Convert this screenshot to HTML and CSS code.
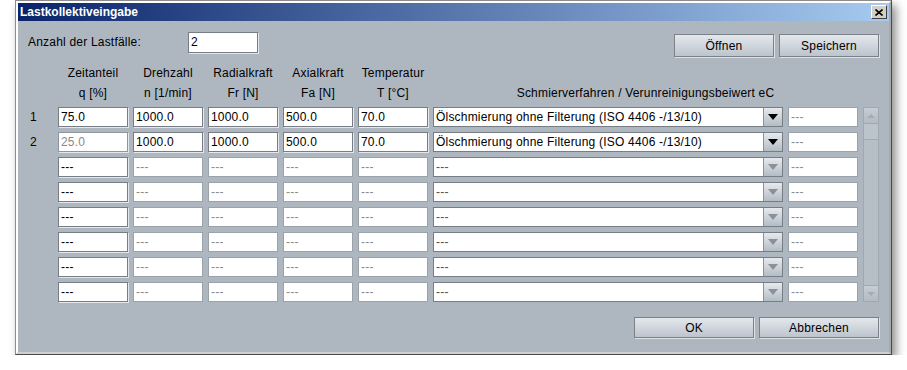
FILE: index.html
```html
<!DOCTYPE html>
<html lang="de">
<head>
  <meta charset="UTF-8" />
  <title>Lastkollektiveingabe</title>
  <link rel="stylesheet" href="styles.css">
</head>
<body>
  <div class="window">
    <div class="frame">
      <div class="titlebar">
        <span>Lastkollektiveingabe</span>
        <span class="close">
          <svg width="8" height="7" viewBox="0 0 8 7"><path d="M0.5 0.5 L7.5 6.5 M7.5 0.5 L0.5 6.5" stroke="#000" stroke-width="1.6" /></svg>
        </span>
      </div>

      <div class="content">
        <div class="top-row">
          <label class="count-label">Anzahl der Lastfälle:</label>
          <div class="count">2</div>
          <div class="top-buttons">
            <div class="btn">Öffnen</div>
            <div class="btn">Speichern</div>
          </div>
        </div>

        <div class="head">
          <div></div>
          <div class="hcell"><span>Zeitanteil</span><span>q [%]</span></div>
          <div class="hcell"><span>Drehzahl</span><span>n [1/min]</span></div>
          <div class="hcell"><span>Radialkraft</span><span>Fr [N]</span></div>
          <div class="hcell"><span>Axialkraft</span><span>Fa [N]</span></div>
          <div class="hcell"><span>Temperatur</span><span>T [°C]</span></div>
          <div class="hcell wide"><span></span><span>Schmierverfahren / Verunreinigungsbeiwert eC</span></div>
        </div>

        <div class="rows">
          <div class="scroll">
            <div class="sb-btn"><span class="tri-up"></span></div>
            <div class="sb-thumb"></div>
            <div class="sb-track"></div>
            <div class="sb-btn"><span class="tri-down"></span></div>
          </div>

          <div class="num">1</div>
          <div class="field">75.0</div>
          <div class="field">1000.0</div>
          <div class="field">1000.0</div>
          <div class="field">500.0</div>
          <div class="field">70.0</div>
          <div class="combo"><span class="combo-text">Ölschmierung ohne Filterung (ISO 4406 -/13/10)</span><span class="arrow"><span class="tri"></span></span></div>
          <div class="field off">---</div>

          <div class="num">2</div>
          <div class="field dim">25.0</div>
          <div class="field">1000.0</div>
          <div class="field">1000.0</div>
          <div class="field">500.0</div>
          <div class="field">70.0</div>
          <div class="combo"><span class="combo-text">Ölschmierung ohne Filterung (ISO 4406 -/13/10)</span><span class="arrow"><span class="tri"></span></span></div>
          <div class="field off">---</div>

          <div class="num"></div>
          <div class="field">---</div>
          <div class="field off">---</div>
          <div class="field off">---</div>
          <div class="field off">---</div>
          <div class="field off">---</div>
          <div class="combo off"><span class="combo-text">---</span><span class="arrow"><span class="tri"></span></span></div>
          <div class="field off">---</div>

          <div class="num"></div>
          <div class="field">---</div>
          <div class="field off">---</div>
          <div class="field off">---</div>
          <div class="field off">---</div>
          <div class="field off">---</div>
          <div class="combo off"><span class="combo-text">---</span><span class="arrow"><span class="tri"></span></span></div>
          <div class="field off">---</div>

          <div class="num"></div>
          <div class="field">---</div>
          <div class="field off">---</div>
          <div class="field off">---</div>
          <div class="field off">---</div>
          <div class="field off">---</div>
          <div class="combo off"><span class="combo-text">---</span><span class="arrow"><span class="tri"></span></span></div>
          <div class="field off">---</div>

          <div class="num"></div>
          <div class="field">---</div>
          <div class="field off">---</div>
          <div class="field off">---</div>
          <div class="field off">---</div>
          <div class="field off">---</div>
          <div class="combo off"><span class="combo-text">---</span><span class="arrow"><span class="tri"></span></span></div>
          <div class="field off">---</div>

          <div class="num"></div>
          <div class="field">---</div>
          <div class="field off">---</div>
          <div class="field off">---</div>
          <div class="field off">---</div>
          <div class="field off">---</div>
          <div class="combo off"><span class="combo-text">---</span><span class="arrow"><span class="tri"></span></span></div>
          <div class="field off">---</div>

          <div class="num"></div>
          <div class="field">---</div>
          <div class="field off">---</div>
          <div class="field off">---</div>
          <div class="field off">---</div>
          <div class="field off">---</div>
          <div class="combo off"><span class="combo-text">---</span><span class="arrow"><span class="tri"></span></span></div>
          <div class="field off">---</div>
        </div>

        <div class="bottom">
          <div class="btn wide-btn">OK</div>
          <div class="btn wide-btn">Abbrechen</div>
        </div>
      </div>
    </div>
  </div>
</body>
</html>
```

FILE: styles.css
```css
* {
  box-sizing: border-box;
}

body {
  margin: 0;
  background: #fff;
  font-family: "Liberation Sans", Arial, sans-serif;
  font-size: 12px;
  color: #000;
}

.window {
  margin-left: 15px;
  width: 877px;
  height: 355px;
  border: 1px solid;
  border-color: #8c8c8c #4a4a4a #4a4a4a #8c8c8c;
  background: #aeb7c0;
  box-shadow: 4px 5px 9px rgba(0, 0, 0, 0.45);
}

.frame {
  height: 100%;
  border: 2px solid;
  border-color: #fff #a9a9a9 #cfcfcf #fff;
}

.titlebar {
  height: 18px;
  display: flex;
  align-items: center;
  padding: 0 2px 0 2px;
  background: linear-gradient(to right, #0a246a, #a6caf0);
  color: #fff;
  font-weight: bold;
}

.close {
  margin-left: auto;
  width: 16px;
  height: 14px;
  display: flex;
  align-items: center;
  justify-content: center;
  background: #d4d0c8;
  border: 1px solid;
  border-color: #fff #404040 #404040 #fff;
}

.content {
  padding: 11px 10px 0 10px;
  letter-spacing: 0.2px;
}

.top-row {
  display: flex;
  height: 25px;
}

.count-label {
  width: 160px;
  line-height: 21px;
}

.count {
  width: 70px;
  height: 21px;
  padding-left: 2px;
  line-height: 19px;
  background: #fff;
  border: 1px solid #767d85;
  box-shadow: 1px 1px 0 #e4e8ec;
}

.top-buttons {
  margin-left: auto;
  margin-top: 2px;
  display: flex;
  gap: 5px;
}

.btn {
  width: 100px;
  height: 23px;
  display: flex;
  align-items: center;
  justify-content: center;
  border: 1px solid #7a8189;
  background: linear-gradient(#e4e8ed, #bcc4cc);
  box-shadow: 1px 1px 0 #dde2e7;
}

.head,
.rows {
  display: grid;
  grid-template-columns: 25px repeat(5, 70px) 350px 70px 16px;
  column-gap: 5px;
}

.head {
  margin-top: 6px;
}

.hcell {
  display: flex;
  flex-direction: column;
  align-items: center;
  line-height: 20px;
  white-space: nowrap;
}

.hcell span {
  height: 20px;
}

.hcell.wide {
  grid-column: span 2;
}

.rows {
  margin-top: 4px;
  grid-auto-rows: 20px;
  row-gap: 5px;
}

.num {
  padding-left: 2px;
  line-height: 20px;
}

.field {
  background: #fff;
  border: 1px solid #767d85;
  box-shadow: 1px 1px 0 #e4e8ec;
  padding-left: 2px;
  line-height: 18px;
  white-space: nowrap;
  overflow: hidden;
}

.field.dim {
  color: #8a8a8a;
  border-color: #8e959c;
}

.field.off {
  color: #8a8a8a;
  border-color: #9aa2aa;
  box-shadow: none;
}

.combo {
  display: flex;
  background: #fff;
  border: 1px solid #767d85;
}

.combo-text {
  flex: 1;
  padding-left: 2px;
  line-height: 18px;
  white-space: nowrap;
  overflow: hidden;
}

.combo.off .combo-text {
  color: #505050;
}

.arrow {
  width: 19px;
  display: flex;
  align-items: center;
  justify-content: center;
  border-left: 1px solid #8a9199;
  background: linear-gradient(#e6eaee, #b4bcc4);
}

.tri {
  width: 0;
  height: 0;
  border-left: 5px solid transparent;
  border-right: 5px solid transparent;
  border-top: 6px solid #000;
}

.combo.off .tri {
  border-top-color: #8a9199;
}

.scroll {
  grid-column: 9;
  grid-row: 1 / span 8;
  display: flex;
  flex-direction: column;
  border: 1px solid #a0a8b0;
  background: #b6bec6;
}

.sb-btn {
  height: 15px;
  display: flex;
  align-items: center;
  justify-content: center;
  background: linear-gradient(#c6cdd4, #b2bac2);
}

.sb-thumb {
  height: 17px;
  border-top: 1px solid #a0a8b0;
  border-bottom: 1px solid #a0a8b0;
  background: #bcc4cb;
}

.sb-track {
  flex: 1;
  border-bottom: 1px solid #a0a8b0;
}

.tri-up,
.tri-down {
  width: 0;
  height: 0;
  border-left: 4px solid transparent;
  border-right: 4px solid transparent;
}

.tri-up {
  border-bottom: 4px solid #a3abb3;
}

.tri-down {
  border-top: 4px solid #a3abb3;
}

.bottom {
  margin-top: 15px;
  display: flex;
  justify-content: flex-end;
  gap: 5px;
}

.wide-btn {
  width: 120px;
  height: 21px;
}
```
